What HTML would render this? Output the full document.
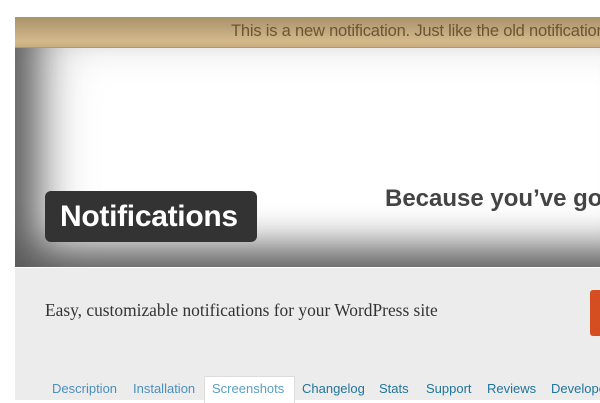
<!DOCTYPE html>
<html><head><style>
body{margin:0;width:600px;height:400px;overflow:hidden;background:#fff;font-family:"Liberation Sans",sans-serif;position:relative}
.ban{position:absolute;left:15px;top:17px;width:600px;height:250px;background:#fff;overflow:hidden}
.bar{position:absolute;left:0;top:0;width:100%;height:30px;background:linear-gradient(#a9916b,#d3b88a 80%,#c9ad80);border-bottom:1px solid #b8985e;color:#6b5533;font-size:16.5px;line-height:29px;text-indent:216px;white-space:nowrap;z-index:2;letter-spacing:-0.2px}
.vig{position:absolute;left:0;top:31px;width:600px;height:219px;box-shadow:inset 25px -25px 40px -5px rgba(0,0,0,.6),inset 40px -10px 50px rgba(0,0,0,.15)}
.badge{position:absolute;left:30px;top:174px;width:212px;height:51px;background:#333;border-radius:6px;color:#fff;font-weight:bold;font-size:30px;line-height:51px;text-indent:15px;letter-spacing:-0.3px;white-space:nowrap}
.bec{position:absolute;left:370px;top:168px;font-weight:bold;font-size:24px;color:#444;white-space:nowrap}
.low{position:absolute;left:15px;top:268px;width:600px;height:132px;background:#ececec}
.desc{position:absolute;left:45px;top:300px;font-family:"Liberation Serif",serif;font-size:17.4px;color:#333;white-space:nowrap}
.btn{position:absolute;left:590px;top:290px;width:20px;height:46px;background:#d54e21;border-radius:3px}
.t{position:absolute;top:381px;font-size:13px;color:#21759b;white-space:nowrap}
.a{position:absolute;left:204px;top:376px;width:89px;height:26px;background:#fff;border:1px solid #ddd;border-bottom:none}
</style></head><body>
<div class="ban">
<div class="bar">This is a new notification. Just like the old notification</div>
<div class="vig"></div>
<div class="badge">Notifications</div>
<div class="bec">Because you’ve go</div>
</div>
<div class="low"></div>
<div class="desc">Easy, customizable notifications for your WordPress site</div>
<div class="btn"></div>
<div class="a"></div>
<div class="t" style="left:52px;color:#4a8fbc">Description</div>
<div class="t" style="left:133px;color:#4a8fbc">Installation</div>
<div class="t" style="left:212px;color:#5a9fc4">Screenshots</div>
<div class="t" style="left:302px">Changelog</div>
<div class="t" style="left:379px">Stats</div>
<div class="t" style="left:426px">Support</div>
<div class="t" style="left:487px">Reviews</div>
<div class="t" style="left:551px">Developers</div>
</body></html>
